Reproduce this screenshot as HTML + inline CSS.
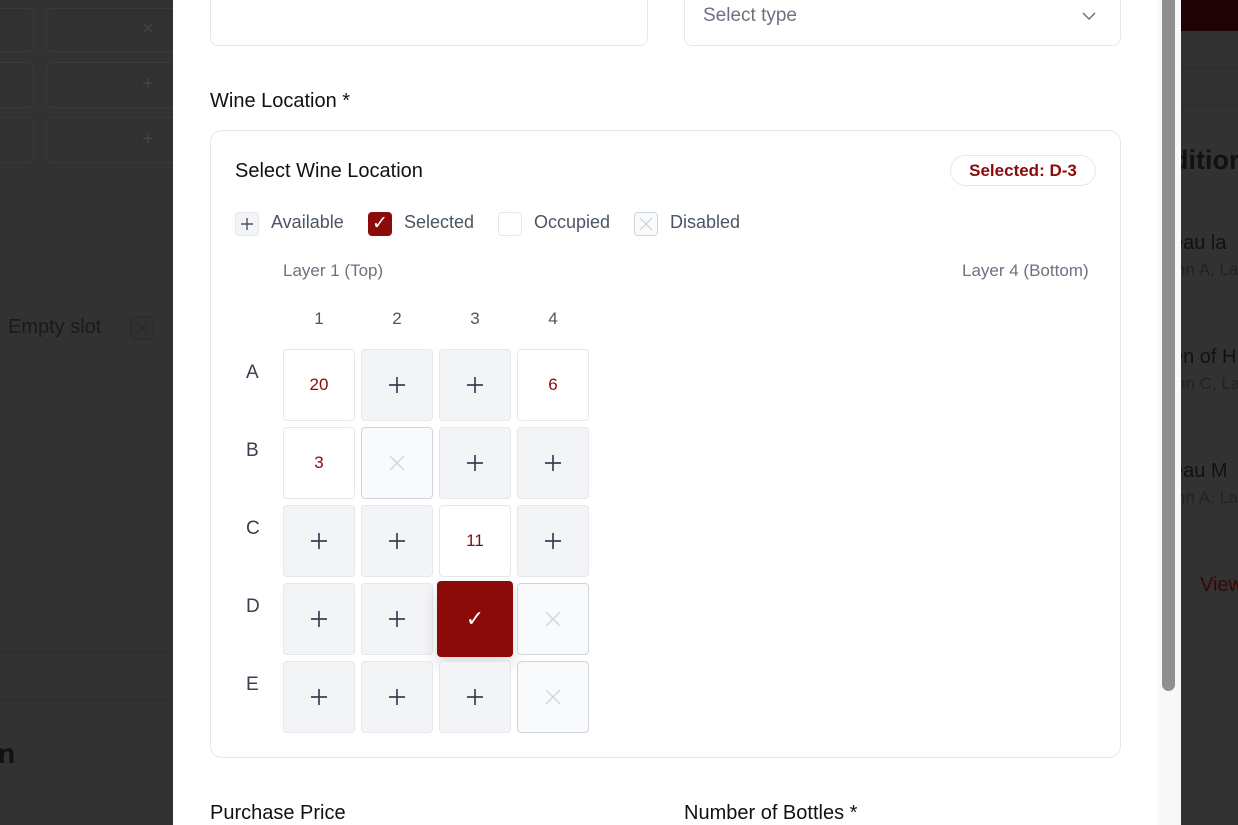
<!DOCTYPE html>
<html><head><style>
*{box-sizing:border-box;margin:0;padding:0}
body{width:1238px;height:825px;overflow:hidden;background:#323232;font-family:"Liberation Sans",sans-serif;position:relative}
.a{position:absolute;white-space:nowrap}
.bgbox{position:absolute;border:1px solid #3a3a3a;border-radius:6px;background:#313131}
.modal{position:absolute;left:173px;top:0;width:1008px;height:825px;background:#fff}
.cell{position:absolute;width:72px;height:72px;border-radius:4px;border:1px solid #e5e7eb;background:#f3f4f6;display:flex;align-items:center;justify-content:center;font-size:17px;color:#8b0a0a}
.occ{background:#fff}
.dis{background:#f9fafb;border-color:#d1d5db}
.lbl{position:absolute;font-size:19px;color:#374151}
.col{position:absolute;font-size:17px;color:#4b5563;top:309px;width:72px;text-align:center}
</style></head><body>
<div class="bgbox" style="left:-10px;top:8px;width:44px;height:44px"></div>
<div class="bgbox" style="left:46px;top:8px;width:140px;height:44px"></div>
<div class="bgbox" style="left:-10px;top:62px;width:44px;height:46px"></div>
<div class="bgbox" style="left:46px;top:62px;width:140px;height:46px"></div>
<div class="bgbox" style="left:-10px;top:117px;width:44px;height:46px"></div>
<div class="bgbox" style="left:46px;top:117px;width:140px;height:46px"></div>
<div class="a" style="left:142px;top:18px;color:#444;font-size:20px">×</div>
<div class="a" style="left:142px;top:73px;color:#444;font-size:20px">+</div>
<div class="a" style="left:142px;top:128px;color:#444;font-size:20px">+</div>
<div class="a" style="left:8px;top:316px;color:#1a1a1a;font-size:20px">Empty slot</div>
<div class="bgbox" style="left:130px;top:316px;width:24px;height:24px;border-color:#2a2a2a"><svg width="22" height="22"><path d="M5 5l12 12M17 5L5 17" stroke="#2a2a2a" stroke-width="1.3"/></svg></div>
<div class="a" style="left:0;top:651px;width:173px;border-top:1px solid #2c2c2c"></div>
<div class="a" style="left:0;top:700px;width:173px;border-top:1px solid #2c2c2c"></div>
<div class="a" style="left:-2px;top:738px;color:#111;font-size:28px;font-weight:bold">n</div>
<div class="a" style="left:1181px;top:0;width:57px;height:31px;background:#1e0304"></div>
<div class="a" style="left:1181px;top:67px;width:57px;border-top:1px solid #2c2c2c"></div>
<div class="a" style="left:1181px;top:105px;width:57px;border-top:1px solid #2c2c2c"></div>
<div class="a" style="left:1172px;top:145px;color:#111;font-size:27px;font-weight:bold">ditior</div>
<div class="a" style="left:1172px;top:232px;color:#111;font-size:20px">eau la</div>
<div class="a" style="left:1176px;top:260px;color:#222;font-size:17px">nn A, La</div>
<div class="a" style="left:1172px;top:346px;color:#111;font-size:20px">en of H</div>
<div class="a" style="left:1176px;top:374px;color:#222;font-size:17px">nn C, La</div>
<div class="a" style="left:1172px;top:460px;color:#111;font-size:20px">eau M</div>
<div class="a" style="left:1176px;top:488px;color:#222;font-size:17px">nn A, La</div>
<div class="a" style="left:1200px;top:574px;color:#3a0505;font-size:20px">View</div>
<div class="modal">
 <div class="a" style="left:985px;top:0;width:23px;height:825px;background:#f8f8f8"></div>
 <div class="a" style="left:989px;top:0;width:13px;height:691px;background:#8f8f8f;border-radius:0 0 7px 7px"></div>
 <div class="a" style="left:37px;top:-10px;width:438px;height:56px;border:1px solid #e5e7eb;border-radius:8px"></div>
 <div class="a" style="left:511px;top:-10px;width:437px;height:56px;border:1px solid #e5e7eb;border-radius:8px"></div>
 <div class="a" style="left:530px;top:5px;font-size:19px;color:#6b7280">Select type</div>
 <svg class="a" style="left:908px;top:10px" width="16" height="12"><path d="M2 3l6 6 6-6" fill="none" stroke="#6b7280" stroke-width="1.5"/></svg>
 <div class="a" style="left:37px;top:90px;font-size:20px;color:#111">Wine Location *</div>
 <div class="a" style="left:37px;top:130px;width:911px;height:628px;border:1px solid #e5e7eb;border-radius:12px"></div>
 <div class="a" style="left:62px;top:160px;font-size:20px;color:#111">Select Wine Location</div>
 <div class="a" style="left:777px;top:155px;width:146px;height:31px;border:1px solid #e5e7eb;border-radius:16px;font-size:17px;font-weight:bold;color:#8b0a0a;text-align:center;line-height:29px">Selected: D-3</div>
 <div class="a" style="left:62px;top:212px;width:24px;height:24px;border:1px solid #e5e7eb;border-radius:4px;background:#f3f4f6"><svg width="22" height="22"><path d="M11 5v12M5 11h12" stroke="#4b5563" stroke-width="1.4"/></svg></div>
 <div class="a" style="left:98px;top:212px;font-size:18px;color:#4b5563">Available</div>
 <div class="a" style="left:195px;top:212px;width:24px;height:24px;border-radius:4px;background:#8b0a0a;text-align:center;line-height:24px;font-size:19px;color:#fff">✓</div>
 <div class="a" style="left:231px;top:212px;font-size:18px;color:#4b5563">Selected</div>
 <div class="a" style="left:325px;top:212px;width:24px;height:24px;border:1px solid #e5e7eb;border-radius:4px"></div>
 <div class="a" style="left:361px;top:212px;font-size:18px;color:#4b5563">Occupied</div>
 <div class="a" style="left:461px;top:212px;width:24px;height:24px;border:1px solid #d1d5db;border-radius:4px;background:#f9fafb"><svg width="22" height="22"><path d="M5 5l12 12M17 5L5 17" stroke="#d1d5db" stroke-width="1.3"/></svg></div>
 <div class="a" style="left:497px;top:212px;font-size:18px;color:#4b5563">Disabled</div>
 <div class="a" style="left:110px;top:261px;font-size:17px;color:#6b7280">Layer 1 (Top)</div>
 <div class="a" style="left:789px;top:261px;font-size:17px;color:#6b7280">Layer 4 (Bottom)</div>
 <div class="col" style="left:110px">1</div><div class="col" style="left:188px">2</div><div class="col" style="left:266px">3</div><div class="col" style="left:344px">4</div>
 <div class="lbl" style="left:73px;top:362px">A</div>
 <div class="lbl" style="left:73px;top:440px">B</div>
 <div class="lbl" style="left:73px;top:518px">C</div>
 <div class="lbl" style="left:73px;top:596px">D</div>
 <div class="lbl" style="left:73px;top:674px">E</div>
</div>
<div id="g"></div>
<script>
var m=[["20","+","+","6"],["3","x","+","+"],["+","+","11","+"],["+","+","s","x"],["+","+","+","x"]];
var xs=[283,361,439,517],h="";
var plus='<svg width="20" height="20"><path d="M10 2v16M2 10h16" stroke="#374151" stroke-width="1.7"/></svg>';
var x='<svg width="18" height="18"><path d="M2 2l14 14M16 2L2 16" stroke="#d1d5db" stroke-width="1.4"/></svg>';
for(var r=0;r<5;r++)for(var c=0;c<4;c++){var v=m[r][c],l=xs[c],t=349+r*78;
if(v=="+")h+='<div class="cell" style="left:'+l+'px;top:'+t+'px">'+plus+'</div>';
else if(v=="x")h+='<div class="cell dis" style="left:'+l+'px;top:'+t+'px">'+x+'</div>';
else if(v=="s")h+='<div class="cell" style="left:'+(l-2)+'px;top:'+(t-2)+'px;width:76px;height:76px;background:#8b0a0a;border-color:#8b0a0a;color:#fff;font-size:22px;box-shadow:0 8px 16px rgba(0,0,0,.15)">✓</div>';
else h+='<div class="cell occ" style="left:'+l+'px;top:'+t+'px">'+v+'</div>';}
document.getElementById("g").innerHTML=h;
</script>
<div class="a" style="left:210px;top:802px;font-size:20px;color:#111">Purchase Price</div>
<div class="a" style="left:684px;top:802px;font-size:20px;color:#111">Number of Bottles *</div>
</body></html>
